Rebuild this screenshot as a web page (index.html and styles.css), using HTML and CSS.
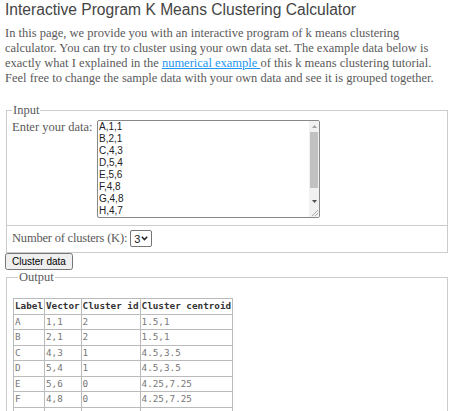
FILE: index.html
```html
<!DOCTYPE html>
<html>
<head>
<meta charset="utf-8">
<link rel="stylesheet" href="styles.css">
</head>
<body>
<h1 class="title">Interactive Program K Means Clustering Calculator</h1>
<p class="intro">In this page, we provide you with an interactive program of k means clustering calculator. You can try to cluster using your own data set. The example data below is exactly what I explained in the <a class="link" href="#">numerical example </a>of this k means clustering tutorial. Feel free to change the sample data with your own data and see it is grouped together.</p>
<fieldset class="box">
  <legend class="legend">Input</legend>
  <div class="row row-data">
    <label class="label">Enter your data:</label>
    <div class="ta-wrap">
      <textarea class="data">A,1,1
B,2,1
C,4,3
D,5,4
E,5,6
F,4,8
G,4,8
H,4,7
I,2,6
J,3,7
K,1,8</textarea>
      <div class="sb">
        <div class="sb-btn"><svg width="5" height="3" viewBox="0 0 5 3"><path d="M0 3 L2.5 0 L5 3 Z" fill="#a3a3a3"/></svg></div>
        <div class="sb-track"><div class="sb-thumb"></div></div>
        <div class="sb-btn"><svg width="5" height="3" viewBox="0 0 5 3"><path d="M0 0 L2.5 3 L5 0 Z" fill="#505050"/></svg></div>
        <div class="sb-corner"><svg width="10" height="10" viewBox="0 0 10 10"><path d="M9 3 L3 9 M9 6 L6 9" stroke="#999" stroke-width="0.8" fill="none"/></svg></div>
      </div>
    </div>
  </div>
  <div class="row row-k">
    <label class="label label-k">Number of clusters (K):</label>
    <span class="select-wrap">
      <select class="select"><option>2</option><option selected>3</option><option>4</option></select>
      <svg class="chev" width="7" height="5" viewBox="0 0 7 5"><path d="M0.8 0.8 L3.5 3.6 L6.2 0.8" fill="none" stroke="#222" stroke-width="1.5"/></svg>
    </span>
  </div>
</fieldset>
<button class="btn">Cluster data</button>
<fieldset class="box out">
  <legend class="legend">Output</legend>
  <table class="result">
    <tr><th>Label</th><th>Vector</th><th>Cluster id</th><th>Cluster centroid</th></tr>
    <tr><td>A</td><td>1,1</td><td>2</td><td>1.5,1</td></tr>
    <tr><td>B</td><td>2,1</td><td>2</td><td>1.5,1</td></tr>
    <tr><td>C</td><td>4,3</td><td>1</td><td>4.5,3.5</td></tr>
    <tr><td>D</td><td>5,4</td><td>1</td><td>4.5,3.5</td></tr>
    <tr><td>E</td><td>5,6</td><td>0</td><td>4.25,7.25</td></tr>
    <tr><td>F</td><td>4,8</td><td>0</td><td>4.25,7.25</td></tr>
    <tr><td>G</td><td>4,8</td><td>0</td><td>4.25,7.25</td></tr>
    <tr><td>H</td><td>4,7</td><td>0</td><td>4.25,7.25</td></tr>
  </table>
</fieldset>
</body>
</html>
```
FILE: styles.css
```css
html, body { background: #fff; }
body {
  margin: 0 2px 0 5px;
  font-family: "Liberation Serif", "Times New Roman", serif;
  font-size: 12.5px;
  color: #5a5a5a;
}
.title {
  font-family: "Liberation Sans", Arial, sans-serif;
  font-size: 15.6px;
  font-weight: normal;
  color: #444;
  line-height: 20px;
  margin: 0;
}
.intro {
  margin: 6px 0 17px 0;
  line-height: 15px;
}
.link { color: #2196f3; }
.box {
  margin: 0 0 0 1px;
  padding: 0;
  border: 1px solid #ccc;
  min-width: 0;
}
.legend {
  padding: 0 1px;
  margin-left: 5px;
  line-height: 15px;
}
.row {
  display: flex;
  gap: 3px;
  padding: 2px 5px 7px 5px;
}
.row-data {
  align-items: flex-start;
  border-bottom: 1px solid #ccc;
}
.label { line-height: 15px; }
.row-data .label { width: 82px; flex: none; }
.ta-wrap {
  position: relative;
  flex: none;
  width: 223px;
  height: 98px;
}
.data {
  display: block;
  width: 100%;
  height: 100%;
  box-sizing: border-box;
  margin: 0;
  padding: 0 12px 0 1px;
  font-family: "Liberation Sans", Arial, sans-serif;
  font-size: 10px;
  line-height: 12px;
  color: #222;
  border: 1px solid #888;
  border-radius: 2px;
  overflow: hidden;
  resize: none;
}
.sb {
  position: absolute;
  top: 1px;
  right: 1px;
  bottom: 1px;
  width: 10px;
  background: #f1f1f1;
  display: flex;
  flex-direction: column;
}
.sb-btn {
  height: 11px;
  flex: none;
  display: flex;
  align-items: center;
  justify-content: center;
}
.sb-track {
  flex: 1;
  padding: 0 1px;
}
.sb-thumb {
  height: 56px;
  background: #c1c1c1;
}
.sb-corner {
  height: 10px;
  flex: none;
  background: #f1f1f1;
}
.sb-corner svg { display: block; }
.row-k {
  align-items: center;
  padding: 4px 5px 5px 5px;
}
.label-k { letter-spacing: -0.2px; }
.select-wrap {
  position: relative;
  display: inline-block;
  height: 17px;
}
.select {
  appearance: none;
  -webkit-appearance: none;
  font-family: "Liberation Sans", Arial, sans-serif;
  font-size: 11px;
  color: #222;
  width: 22px;
  height: 17px;
  margin: 0;
  padding: 0 0 0 3px;
  border: 1px solid #767676;
  border-radius: 2px;
  background: #fff;
}
.chev {
  position: absolute;
  right: 4px;
  top: 6px;
  pointer-events: none;
}
.btn {
  display: block;
  margin: 0;
  font-family: "Liberation Sans", Arial, sans-serif;
  font-size: 10px;
  height: 17px;
  padding: 0 5px;
}
.out {
  margin-top: 0;
  padding: 13px 6px 0 6px;
}
.result {
  border-collapse: collapse;
  font-family: "DejaVu Sans Mono", monospace;
  font-size: 9.3px;
  line-height: 14.5px;
  color: #777;
}
.result th, .result td {
  border: 1px solid #bbb;
  padding: 0 1px;
  text-align: left;
}
.result th { color: #333; font-weight: bold; }
```
